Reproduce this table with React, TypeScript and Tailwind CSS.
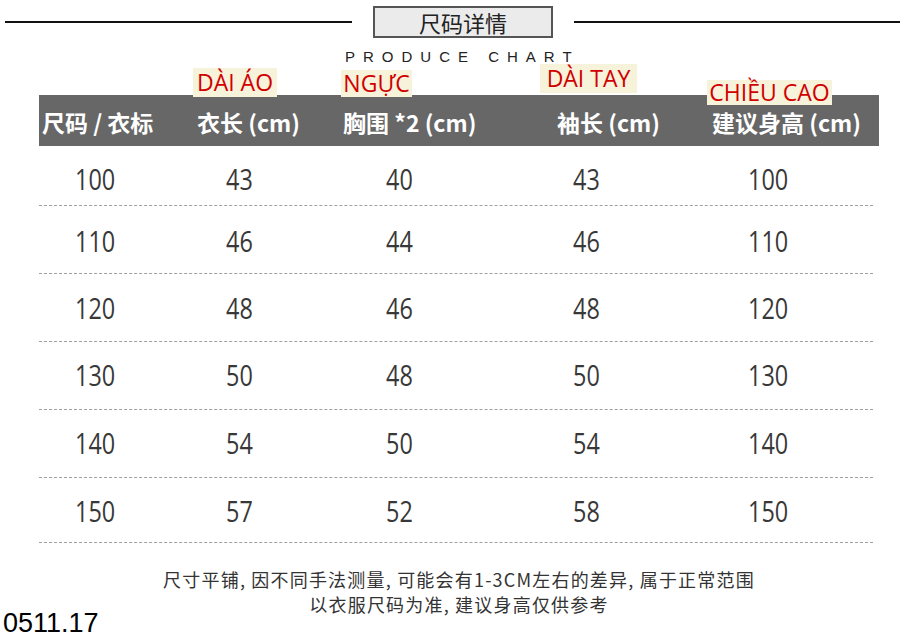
import React from "react";

const COLS = [
  { head: "尺码 / 衣标", hp: "pl-[3px]", dp: "pl-[36px]" },
  { head: "衣长 (cm)", hp: "pl-[8px]", dp: "pl-[37px]" },
  { head: "胸围 *2 (cm)", hp: "pl-[4px]", dp: "pl-[47px]" },
  { head: "袖长 (cm)", hp: "pl-[13px]", dp: "pl-[29px]" },
  { head: "建议身高 (cm)", hp: "pl-[0px]", dp: "pl-[36px]" },
];

const ROWS = [
  ["100", "43", "40", "43", "100"],
  ["110", "46", "44", "46", "110"],
  ["120", "48", "46", "48", "120"],
  ["130", "50", "48", "50", "130"],
  ["140", "54", "50", "54", "140"],
  ["150", "57", "52", "58", "150"],
];

const ROW_BOX = [
  "h-[60px] pt-[18px]",
  "h-[68px] pt-[20px]",
  "h-[68px] pt-[19px]",
  "h-[68px] pt-[18px]",
  "h-[68px] pt-[18px]",
  "h-[65px] pt-[18px]",
];

const LABELS = [
  { text: "DÀI ÁO", pos: "left-[193px] top-[68px] w-[84px] h-[29px]" },
  { text: "NGỰC", pos: "left-[341px] top-[70px] w-[71px] h-[27px]" },
  { text: "DÀI TAY", pos: "left-[540px] top-[64px] w-[97px] h-[29px]" },
  { text: "CHIỀU CAO", pos: "left-[707px] top-[80px] w-[125px] h-[25px]" },
];

export default function App() {
  return (
    <div className="relative w-[918px] h-[642px] overflow-hidden bg-white font-['Noto_Sans_CJK_SC',sans-serif]">
      {/* title strip */}
      <div className="flex items-center pt-[6px] pl-[5px]">
        <div className="w-[347px] h-[2px] bg-[#111]" />
        <div className="mx-[21px] w-[180px] h-[32px] border-2 border-[#555] bg-[#ebebeb] flex items-center justify-center text-[22px] leading-none text-[#222]">
          尺码详情
        </div>
        <div className="w-[326px] h-[2px] bg-[#111]" />
      </div>

      <div className="mt-[11px] h-[15px] pl-[345px] text-[15px] leading-none tracking-[8px] text-[#222] font-['Liberation_Sans',Arial,sans-serif]">
        PRODUCE CHART
      </div>

      {/* header bar */}
      <div className="mt-[31px] ml-[39px] w-[840px] h-[51px] pt-[4px] bg-[#676767] grid grid-cols-[150px_150px_205px_168px_167px] items-center text-white text-[23px] font-bold leading-none">
        {COLS.map((c) => (
          <div key={c.head} className={c.hp}>
            {c.head}
          </div>
        ))}
      </div>

      {/* rows */}
      <div className="ml-[39px] w-[834px]">
        {ROWS.map((r, i) => (
          <div
            key={r[0]}
            className={`grid grid-cols-[150px_150px_205px_168px_161px] items-start border-b border-dashed border-[#a0a0a0] ${ROW_BOX[i]}`}
          >
            {r.map((v, j) => (
              <div key={j} className={COLS[j].dp}>
                <span className="inline-block origin-left scale-x-[0.78] text-[30px] leading-none text-[#383838] font-['Open_Sans',sans-serif]">
                  {v}
                </span>
              </div>
            ))}
          </div>
        ))}
      </div>

      {/* note */}
      <div className="mt-[24px] text-center text-[18px] leading-[25px] tracking-[1.2px] text-[#333]">
        <p>尺寸平铺, 因不同手法测量, 可能会有1-3CM左右的差异, 属于正常范围</p>
        <p>以衣服尺码为准, 建议身高仅供参考</p>
      </div>

      {/* annotations */}
      {LABELS.map((l) => (
        <div
          key={l.text}
          className={`absolute ${l.pos} bg-[#f7f2da] flex items-center justify-center text-[23px] leading-none text-[#d10000] font-['Open_Sans',sans-serif]`}
        >
          {l.text}
        </div>
      ))}

      <div className="absolute left-[3px] top-[610px] text-[27px] leading-none text-black font-['Liberation_Sans',Arial,sans-serif]">
        0511.17
      </div>
    </div>
  );
}
